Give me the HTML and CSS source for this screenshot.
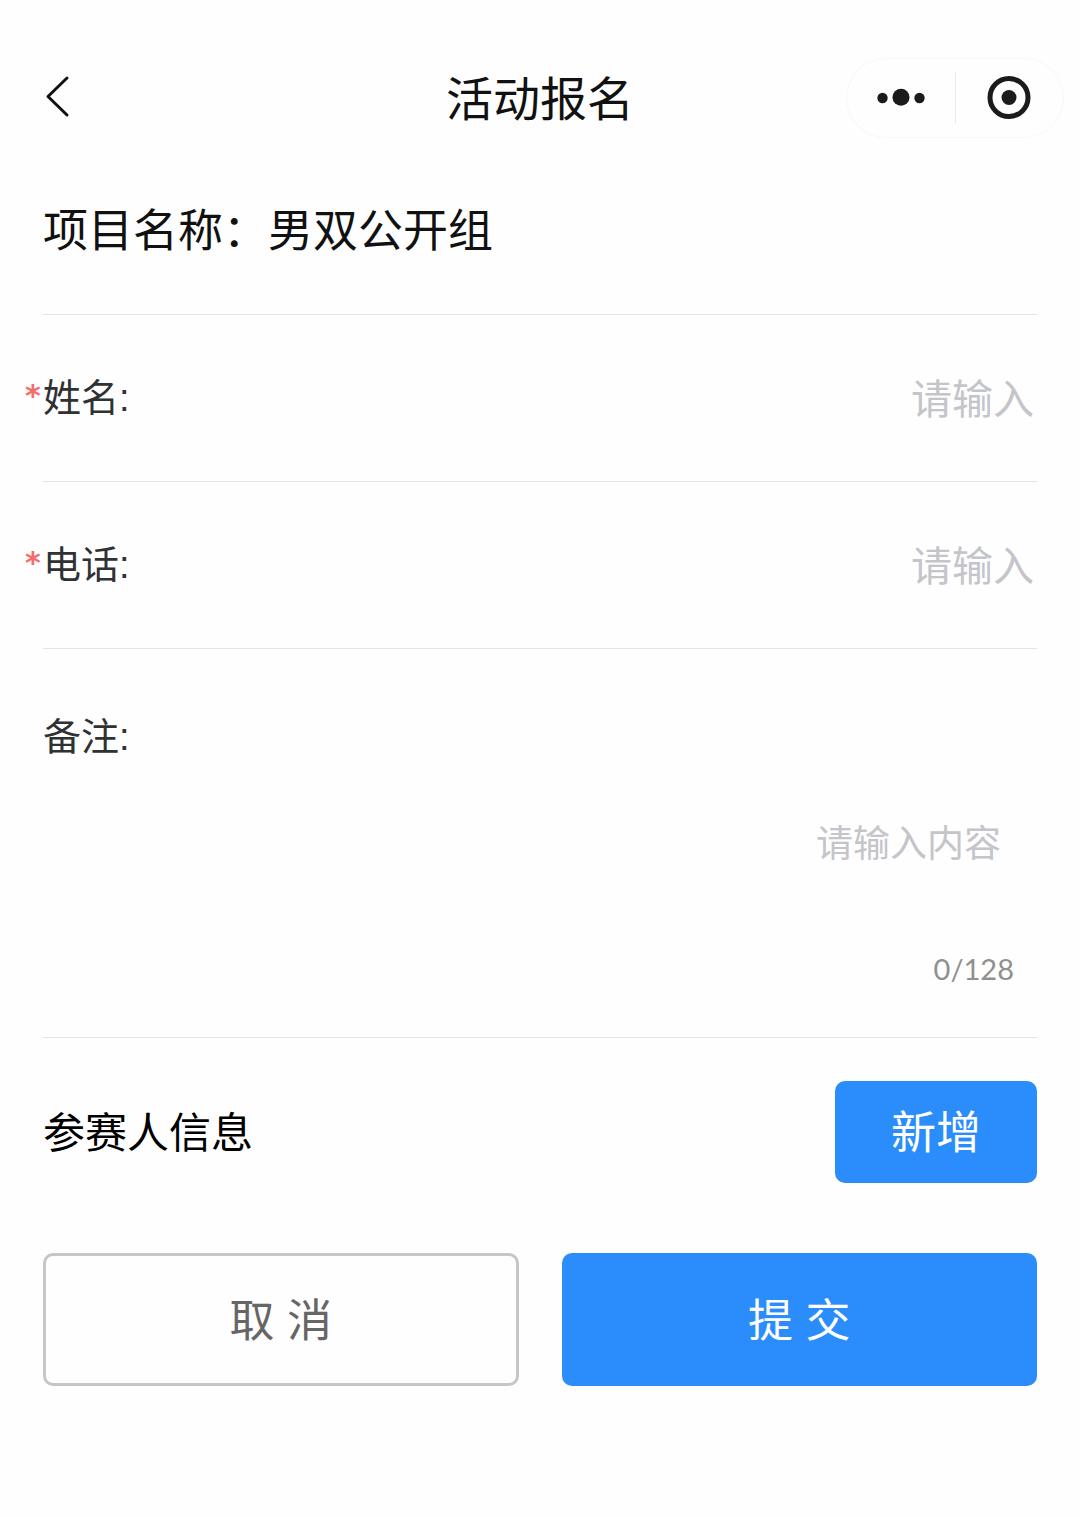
FILE: index.html
```html
<!DOCTYPE html>
<html lang="zh-CN">
<head>
    <meta charset="UTF-8">
    <meta name="viewport" content="width=device-width, initial-scale=1.0">
    <title>活动报名</title>
    <link rel="stylesheet" href="styles.css">
</head>
<body>
    <header class="navbar">
        <button type="button" class="back" aria-label="返回">
            <svg width="30" height="46" viewBox="0 0 30 46" fill="none" stroke="#111" stroke-width="3" stroke-linecap="round" stroke-linejoin="round">
                <path d="M24 3L5 21.500L24 40"/>
            </svg>
        </button>
        <h1 class="title">活动报名</h1>
        <div class="capsule">
            <button type="button" class="capsule-btn" aria-label="更多">
                <svg width="48" height="20" viewBox="0 0 48 20" fill="#1b1b1b">
                    <circle cx="5.500" cy="10" r="5.200"/>
                    <circle cx="24" cy="9.300" r="8.500"/>
                    <circle cx="42.500" cy="10" r="5.200"/>
                </svg>
            </button>
            <span class="capsule-line"></span>
            <button type="button" class="capsule-btn" aria-label="关闭">
                <svg width="44" height="44" viewBox="0 0 44 44">
                    <circle cx="22" cy="21.500" r="19" fill="none" stroke="#1b1b1b" stroke-width="5"/>
                    <circle cx="22" cy="21.500" r="7.500" fill="#1b1b1b"/>
                </svg>
            </button>
        </div>
    </header>

    <form class="form">
        <h2 class="project">项目名称：男双公开组</h2>

        <div class="row">
            <label class="label" for="name"><span class="required">*</span>姓名:</label>
            <input class="input" id="name" type="text" placeholder="请输入">
        </div>
        <div class="row">
            <label class="label" for="phone"><span class="required">*</span>电话:</label>
            <input class="input" id="phone" type="tel" placeholder="请输入">
        </div>
        <div class="remark">
            <label class="label" for="remark">备注:</label>
            <textarea class="textarea" id="remark" maxlength="128" placeholder="请输入内容"></textarea>
            <div class="counter">0/128</div>
        </div>

        <div class="players">
            <h2 class="players-title">参赛人信息</h2>
            <button type="button" class="btn btn-primary btn-add">新增</button>
        </div>

        <div class="actions">
            <button type="button" class="btn btn-cancel">取 消</button>
            <button type="submit" class="btn btn-primary">提 交</button>
        </div>
    </form>
</body>
</html>
```
FILE: styles.css
```css
* {
    box-sizing: border-box;
}
body {
    margin: 0;
    background: #fefefe;
    color: #111;
    font-family: "Liberation Sans", "Noto Sans CJK SC", sans-serif;
}
h1, h2 {
    margin: 0;
    font-weight: 400;
}
button, input, textarea {
    font-family: inherit;
}
svg {
    display: block;
}

/* top bar */
.navbar {
    display: grid;
    grid-template-columns: 1fr auto 1fr;
    align-items: center;
    padding: 56px 16px 0;
}
.back {
    justify-self: start;
    margin-left: 27px;
    padding: 0;
    border: none;
    background: none;
}
.title {
    padding-top: 4px;
    font-size: 47px;
    line-height: 80px;
}
.capsule {
    justify-self: end;
    display: flex;
    align-items: center;
    width: 218px;
    height: 80px;
    border: 1px solid #f8f8f8;
    border-radius: 40px;
}
.capsule-btn {
    flex: 1;
    display: flex;
    justify-content: center;
    padding: 0;
    border: none;
    background: none;
}
.capsule-line {
    width: 1px;
    height: 52px;
    background: #ebebeb;
}

/* form */
.form {
    padding: 0 43px;
}
.project {
    padding: 62px 0 52px;
    border-bottom: 1px solid #e4e4e4;
    font-size: 45px;
    line-height: 60px;
}
.row {
    display: flex;
    align-items: center;
    height: 167px;
    border-bottom: 1px solid #e4e4e4;
}
.label {
    display: flex;
    color: #303133;
    font-size: 38px;
    line-height: 52px;
}
.required {
    width: 18px;
    margin-left: -18px;
    color: #f56c6c;
    font-family: "DejaVu Sans", sans-serif;
    font-size: 30px;
    font-weight: 700;
    line-height: 48px;
}
.input {
    flex: 1;
    min-width: 0;
    padding: 3px 3px 0;
    border: none;
    outline: none;
    background: none;
    font-size: 41px;
    line-height: 60px;
    text-align: right;
}
.input::placeholder,
.textarea::placeholder {
    color: #c4c5ca;
}
.remark {
    padding: 62px 0 48px;
    border-bottom: 1px solid #e4e4e4;
}
.textarea {
    display: block;
    width: 100%;
    height: 130px;
    margin-top: 56px;
    padding: 0 36px;
    border: none;
    outline: none;
    background: none;
    font-size: 37px;
    line-height: 52px;
    text-align: right;
    resize: none;
}
.counter {
    padding-right: 23px;
    color: #909090;
    font-family: Lato, sans-serif;
    font-size: 29px;
    line-height: 40px;
    text-align: right;
}
.players {
    display: flex;
    align-items: center;
    justify-content: space-between;
    padding: 43px 0 70px;
}
.players-title {
    padding-top: 4px;
    color: #000;
    font-size: 42px;
    line-height: 60px;
}
.actions {
    display: grid;
    grid-template-columns: 1fr 1fr;
    gap: 43px;
}
.btn {
    height: 133px;
    padding: 0 0 4px;
    border: none;
    border-radius: 10px;
    font-size: 45px;
}
.btn-primary {
    background: #2b8cfc;
    color: #fff;
}
.btn-cancel {
    border: 3px solid #c6c6c6;
    background: none;
    color: #666;
}
.btn-add {
    width: 202px;
    height: 102px;
    padding-bottom: 6px;
}
```
